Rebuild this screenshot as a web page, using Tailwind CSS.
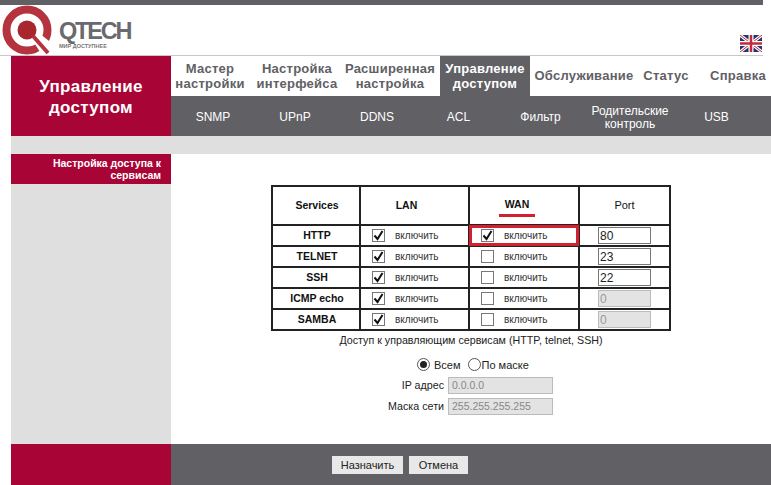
<!DOCTYPE html>
<html><head><meta charset="utf-8"><script src="https://cdn.jsdelivr.net/npm/@tailwindcss/browser@4"></script></head>
<body class="bg-white overflow-hidden font-['Liberation_Sans',Arial,sans-serif]">
<div class="w-[771px] h-[485px] flex flex-col">
  <div class="h-[5px] w-[763px] bg-[#616065]"></div>
  <div class="h-[51px] w-[763px] border-b border-[#c8c8c8] relative flex items-center">
    <svg class="absolute left-[2px] top-0" width="54" height="51" viewBox="0 0 54 51"><circle cx="25" cy="25" r="20.500" fill="none" stroke="#b5333f" stroke-width="8"/><path d="M29 33 L40 50 L52 50 L52 40 L37 28Z" fill="#fff"/><circle cx="25" cy="25" r="9.500" fill="#a8272f"/><path d="M31 31 L46 48" stroke="#b5333f" stroke-width="4"/></svg>
    <div class="absolute left-[59px] top-[13px] text-[23.500px] leading-[26px] font-bold text-[#6a696e] tracking-[-2.200px]">QTECH</div>
    <div class="absolute left-[59px] top-[38px] text-[5.500px] leading-[6px] font-bold text-[#777] whitespace-nowrap">МИР ДОСТУПНЕЕ</div>
    <svg class="absolute left-[740px] top-[30px]" width="22" height="17" viewBox="0 0 22 17"><rect width="22" height="17" fill="#27356f"/><path d="M0 0L22 17M22 0L0 17" stroke="#fff" stroke-width="3"/><path d="M0 0L22 17M22 0L0 17" stroke="#c6283a" stroke-width="1"/><path d="M11 0V17M0 8.500H22" stroke="#fff" stroke-width="5"/><path d="M11 0V17M0 8.500H22" stroke="#c6283a" stroke-width="2.500"/></svg>
  </div>
  <div class="flex ml-[11px] h-[80px]">
    <div class="w-[160px] bg-[#a80436] text-white font-bold text-[17px] leading-[21px] tracking-[0.3px] text-center pt-[20px]">Управление<br>доступом</div>
    <div class="w-[600px] flex flex-col">
      <div class="h-[40px] flex text-[#616065] font-bold text-[13px] leading-[15px] tracking-[0.25px] text-center whitespace-nowrap">
        <div class="w-[78px] pb-[1px] flex items-center justify-center">Мастер<br>настройки</div>
        <div class="w-[96px] pb-[1px] flex items-center justify-center">Настройка<br>интерфейса</div>
        <div class="w-[90px] pb-[1px] flex items-center justify-center">Расширенная<br>настройка</div>
        <div class="w-[90px] pb-[1px] ml-[5px] bg-[#616065] text-white flex items-center justify-center">Управление<br>доступом</div>
        <div class="w-[108px] pb-[1px] flex items-center justify-center">Обслуживание</div>
        <div class="w-[56px] pb-[1px] flex items-center justify-center">Статус</div>
        <div class="w-[77px] pb-[1px] pl-[11px] flex items-center justify-center">Справка</div>
      </div>
      <div class="h-[40px] bg-[#616065] flex text-white text-[12px] leading-[13px] text-center pt-[3px]">
        <div class="w-[84px] flex items-center justify-center">SNMP</div>
        <div class="w-[80px] flex items-center justify-center">UPnP</div>
        <div class="w-[84px] flex items-center justify-center">DDNS</div>
        <div class="w-[79px] flex items-center justify-center">ACL</div>
        <div class="w-[85px] flex items-center justify-center">Фильтр</div>
        <div class="w-[94px] flex items-center justify-center">Родительские<br>контроль</div>
        <div class="w-[79px] flex items-center justify-center">USB</div>
      </div>
    </div>
  </div>
  <div class="h-[18px] ml-[11px] bg-[#dfdfdf]"></div>
  <div class="flex ml-[11px] h-[290px]">
    <div class="w-[160px] bg-[#dfdfdf]">
      <div class="h-[30px] bg-[#a80436] text-white font-bold text-[10.500px] leading-[12px] text-right pr-[10px] pt-[3px]">Настройка доступа к<br>сервисам</div>
    </div>
    <div class="w-[600px] relative">
      <table class="absolute left-[100px] top-[31px] border-collapse border-2 border-[#222] table-fixed w-[398px] text-[#111]">
        <colgroup><col class="w-[88px]"><col class="w-[109px]"><col class="w-[110px]"><col class="w-[91px]"></colgroup>
        <thead><tr class="h-[39px] text-[10.500px] font-bold">
          <th class="border-2 border-[#222] font-bold pl-[2px]">Services</th>
          <th class="border-2 border-[#222] font-bold pr-[16px]">LAN</th>
          <th class="border-2 border-[#222] font-bold pr-[14px]"><span class="inline-block border-b-[3px] border-[#d3202f] px-[6px] pb-[2px] mt-[3px]">WAN</span></th>
          <th class="border-2 border-[#222] font-normal text-[11px]">Port</th>
        </tr></thead>
        <tbody class="text-[10px]">
          <tr class="h-[21px]">
            <td class="border-2 border-[#222] pl-[2px] text-center font-bold text-[10.500px]">HTTP</td>
            <td class="border-2 border-[#222] pl-[11px]"><div class="flex items-center gap-[10px] h-[17px]"><span class="relative w-[13px] h-[13px] border border-[#777] bg-white"><svg class="absolute -left-[1px] -top-[1px]" width="13" height="13" viewBox="0 0 13 13"><path d="M2.500 6.500L5.500 10L10.500 2" fill="none" stroke="#111" stroke-width="2"/></svg></span><span class="text-[#333]">включить</span></div></td>
            <td class="border-2 border-[#222] pl-[11px] relative"><div class="absolute left-0 right-0 top-0 bottom-0 border-[3px] border-[#d3202f] -m-[1px]"></div><div class="flex items-center gap-[10px] h-[17px]"><span class="relative w-[13px] h-[13px] border border-[#777] bg-white"><svg class="absolute -left-[1px] -top-[1px]" width="13" height="13" viewBox="0 0 13 13"><path d="M2.500 6.500L5.500 10L10.500 2" fill="none" stroke="#111" stroke-width="2"/></svg></span><span class="text-[#333]">включить</span></div></td>
            <td class="border-2 border-[#222] pl-[18px]"><input value="80" class="block w-[53px] h-[17px] border border-[#777] bg-white px-[1px] text-[12px] text-[#222]"></td>
          </tr>
          <tr class="h-[21px]">
            <td class="border-2 border-[#222] pl-[2px] text-center font-bold text-[10.500px]">TELNET</td>
            <td class="border-2 border-[#222] pl-[11px]"><div class="flex items-center gap-[10px] h-[17px]"><span class="relative w-[13px] h-[13px] border border-[#777] bg-white"><svg class="absolute -left-[1px] -top-[1px]" width="13" height="13" viewBox="0 0 13 13"><path d="M2.500 6.500L5.500 10L10.500 2" fill="none" stroke="#111" stroke-width="2"/></svg></span><span class="text-[#333]">включить</span></div></td>
            <td class="border-2 border-[#222] pl-[11px]"><div class="flex items-center gap-[10px] h-[17px]"><span class="w-[13px] h-[13px] border border-[#777] bg-white"></span><span class="text-[#333]">включить</span></div></td>
            <td class="border-2 border-[#222] pl-[18px]"><input value="23" class="block w-[53px] h-[17px] border border-[#777] bg-white px-[1px] text-[12px] text-[#222]"></td>
          </tr>
          <tr class="h-[21px]">
            <td class="border-2 border-[#222] pl-[2px] text-center font-bold text-[10.500px]">SSH</td>
            <td class="border-2 border-[#222] pl-[11px]"><div class="flex items-center gap-[10px] h-[17px]"><span class="relative w-[13px] h-[13px] border border-[#777] bg-white"><svg class="absolute -left-[1px] -top-[1px]" width="13" height="13" viewBox="0 0 13 13"><path d="M2.500 6.500L5.500 10L10.500 2" fill="none" stroke="#111" stroke-width="2"/></svg></span><span class="text-[#333]">включить</span></div></td>
            <td class="border-2 border-[#222] pl-[11px]"><div class="flex items-center gap-[10px] h-[17px]"><span class="w-[13px] h-[13px] border border-[#777] bg-white"></span><span class="text-[#333]">включить</span></div></td>
            <td class="border-2 border-[#222] pl-[18px]"><input value="22" class="block w-[53px] h-[17px] border border-[#777] bg-white px-[1px] text-[12px] text-[#222]"></td>
          </tr>
          <tr class="h-[21px]">
            <td class="border-2 border-[#222] pl-[2px] text-center font-bold text-[10.500px]">ICMP echo</td>
            <td class="border-2 border-[#222] pl-[11px]"><div class="flex items-center gap-[10px] h-[17px]"><span class="relative w-[13px] h-[13px] border border-[#777] bg-white"><svg class="absolute -left-[1px] -top-[1px]" width="13" height="13" viewBox="0 0 13 13"><path d="M2.500 6.500L5.500 10L10.500 2" fill="none" stroke="#111" stroke-width="2"/></svg></span><span class="text-[#333]">включить</span></div></td>
            <td class="border-2 border-[#222] pl-[11px]"><div class="flex items-center gap-[10px] h-[17px]"><span class="w-[13px] h-[13px] border border-[#777] bg-white"></span><span class="text-[#333]">включить</span></div></td>
            <td class="border-2 border-[#222] pl-[18px]"><input value="0" disabled class="block w-[53px] h-[17px] border border-[#bbb] bg-[#e3e3e3] px-[1px] text-[12px] text-[#999]"></td>
          </tr>
          <tr class="h-[21px]">
            <td class="border-2 border-[#222] pl-[2px] text-center font-bold text-[10.500px]">SAMBA</td>
            <td class="border-2 border-[#222] pl-[11px]"><div class="flex items-center gap-[10px] h-[17px]"><span class="relative w-[13px] h-[13px] border border-[#777] bg-white"><svg class="absolute -left-[1px] -top-[1px]" width="13" height="13" viewBox="0 0 13 13"><path d="M2.500 6.500L5.500 10L10.500 2" fill="none" stroke="#111" stroke-width="2"/></svg></span><span class="text-[#333]">включить</span></div></td>
            <td class="border-2 border-[#222] pl-[11px]"><div class="flex items-center gap-[10px] h-[17px]"><span class="w-[13px] h-[13px] border border-[#777] bg-white"></span><span class="text-[#333]">включить</span></div></td>
            <td class="border-2 border-[#222] pl-[18px]"><input value="0" disabled class="block w-[53px] h-[17px] border border-[#bbb] bg-[#e3e3e3] px-[1px] text-[12px] text-[#999]"></td>
          </tr>
        </tbody>
      </table>
      <div class="absolute left-[100px] w-[400px] top-[179px] text-center text-[10.700px] leading-[14px] text-[#222]">Доступ к управляющим сервисам (HTTP, telnet, SSH)</div>
      <div class="absolute left-[246px] top-[202px] flex items-center text-[11px] text-[#222] whitespace-nowrap">
        <span class="w-[13px] h-[13px] rounded-full border border-[#555] flex items-center justify-center mr-[4px]"><span class="w-[7px] h-[7px] rounded-full bg-[#222]"></span></span><span class="mr-[7px] pt-[1px]">Всем</span>
        <span class="w-[13px] h-[13px] rounded-full border border-[#555] mr-[1px]"></span><span class="pt-[1px]">По маске</span>
      </div>
      <div class="absolute left-[217px] top-[223px] flex items-center gap-[4px] text-[10.700px] text-[#222] whitespace-nowrap"><span class="w-[56px] text-right">IP адрес</span><div class="w-[105px] h-[17px] bg-[#e3e3e3] border border-[#bbb] px-[3px] text-[10.500px] leading-[15px] text-[#888]">0.0.0.0</div></div>
      <div class="absolute left-[217px] top-[244px] flex items-center gap-[4px] text-[10.700px] text-[#222] whitespace-nowrap"><span class="w-[56px] text-right">Маска сети</span><div class="w-[105px] h-[17px] bg-[#e3e3e3] border border-[#bbb] px-[3px] text-[10.500px] leading-[15px] text-[#888]">255.255.255.255</div></div>
    </div>
  </div>
  <div class="flex ml-[11px] h-[41px]">
    <div class="w-[160px] bg-[#a80436]"></div>
    <div class="w-[600px] bg-[#616065] flex items-center gap-[6px] pl-[161px] pt-[1px]">
      <button class="w-[71px] h-[18px] bg-[#e8e8e8] text-[11px] text-[#222]">Назначить</button>
      <button class="w-[59px] h-[18px] bg-[#e8e8e8] text-[11px] text-[#222]">Отмена</button>
    </div>
  </div>
</div>
</body></html>
